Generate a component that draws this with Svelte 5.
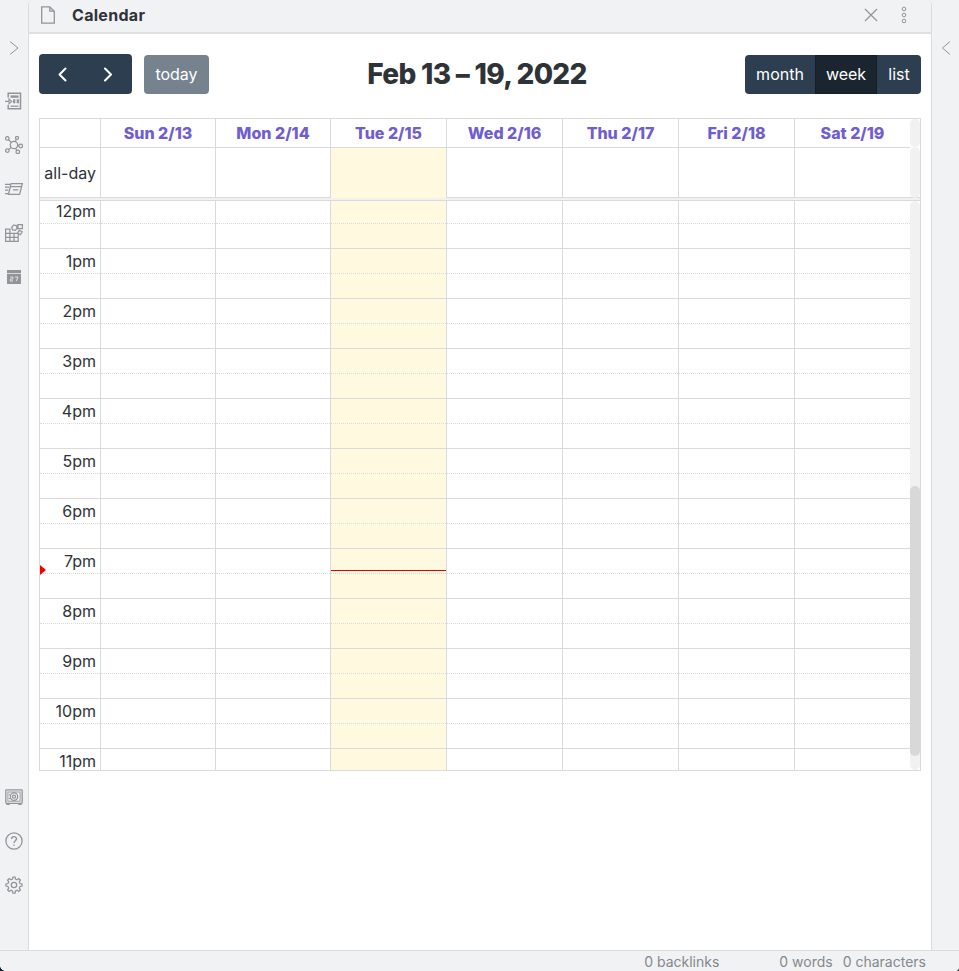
<script>
  const days = ['Sun 2/13', 'Mon 2/14', 'Tue 2/15', 'Wed 2/16', 'Thu 2/17', 'Fri 2/18', 'Sat 2/19'];
  const hours = ['12pm', '1pm', '2pm', '3pm', '4pm', '5pm', '6pm', '7pm', '8pm', '9pm', '10pm', '11pm'];
  const today = 2;
</script>

<div class="app">
  <div class="workspace">
    <nav class="ribbon left">
      <svg class="toggle" width="10" height="16" viewBox="0 0 10 16"><path d="M1 1.5 9 8 1 14.5" /></svg>
      <div class="tools">
        <svg width="18" height="18" viewBox="0 0 18 18">
          <path d="M3.2 5.5V1.3h12.3v15.4H3.2V13" stroke-width="1.5" /><path class="fill" d="M5.5 3.4h8v2.4h-8z" /><path d="M5.5 14.2h8" />
          <path d="M0 9.4h4M4 7l2.8 2.4L4 11.8zM8.6 7.9h1.2v2.9H8.6zM12.2 7.9h1.2v2.9h-1.2z" stroke-width="1.1" />
        </svg>
        <svg width="18" height="18" viewBox="0 0 18 18">
          <circle cx="9" cy="9" r="3.7" /><circle cx="2.3" cy="2.4" r="1.8" /><circle cx="12" cy="1.9" r="1.5" /><circle cx="15.7" cy="10" r="1.8" /><circle cx="2.4" cy="14.6" r="1.8" /><circle cx="12.8" cy="15.8" r="1.8" />
          <path d="m3.6 3.7 2.8 2.9M11.5 3.3 10.2 5.6M12.6 9.4l1.3.3M6.2 11.4 3.9 13.4M10.6 12.3l1.1 2" />
        </svg>
        <svg width="18" height="18" viewBox="0 0 18 18">
          <path d="M6 3.6h11.3L14.6 14.3H3.5zM5.3 6.6h11.1M8 9.8h5.3M0 4.3h5M0 7.2h4M0 10.2h3.3M0 13.7h3.3" stroke-width="1.3" />
        </svg>
        <svg width="18" height="18" viewBox="0 0 18 18">
          <path d="M.6 5.2h4.3v12.2H.6zM.6 9.3h12.6v8.1H.6zM.6 13.3h12.6M9 9.3v8.1M4.9 9.3v8.1" />
          <path d="m8.7 1 2.6.6.9 2.6-1.8 2.2-2.8-.5-.9-2.6zM12.9.7h4.5v4h-4.5zM14.2 6.3l2.9 1.5-1.6 2.9-3-1.6z" />
        </svg>
        <svg width="18" height="18" viewBox="0 0 18 18">
          <path class="fill" d="M2 2h14v3H2zM2 5.8h14V16H2z" />
          <path class="light" d="M5.3 9h2.5v2H5.4v2h2.7M10.1 9h2.8l-1.5 4" />
        </svg>
      </div>
      <div class="tools bottom">
        <svg width="18" height="18" viewBox="0 0 18 18">
          <rect x=".8" y="1.9" width="16.4" height="13.4" rx=".8" stroke-width="1.3" /><rect x="2.9" y="4" width="12.2" height="9.2" stroke-width=".9" /><circle cx="9" cy="8.6" r="3.7" /><circle cx="9" cy="8.6" r="1.6" /><path d="M4.5 6.2v1M4.5 10v1M2 15.5v.8h2v-.8M14 15.5v.8h2v-.8" />
        </svg>
        <svg width="18" height="18" viewBox="0 0 18 18">
          <circle cx="9" cy="9" r="8.1" /><path d="M6.6 7C6.6 3.8 11.5 4 11.5 6.8 11.5 8.7 9 8.7 9 11M9 12.4v1.4" stroke-width="1.4" />
        </svg>
        <svg width="18" height="18" viewBox="0 0 18 18">
          <circle cx="9" cy="9" r="2.7" />
          <path d="M7.9 1h2.2l.4 2 1.6.7L13.8 2.6l1.6 1.6-1.1 1.7.7 1.6 2 .4v2.2l-2 .4-.7 1.6 1.1 1.7-1.6 1.6-1.7-1.1-1.6.7-.4 2H7.9l-.4-2-1.6-.7-1.7 1.1-1.6-1.6 1.1-1.7-.7-1.6-2-.4V7.9l2-.4.7-1.6-1.1-1.7 1.6-1.6 1.7 1.1L7.5 3z" />
        </svg>
      </div>
    </nav>

    <main>
      <header>
        <svg class="doc" width="14" height="18" viewBox="0 0 14 18"><path d="M.7.8h8.1l4.5 4.4v12H.7zM8.8.8v4.4h4.5" stroke-width="1.3" /></svg>
        <span class="view-title">Calendar</span>
        <svg class="close" width="14" height="14" viewBox="0 0 14 14"><path d="m1 1 12 12M13 1 1 13" stroke-width="1.2" /></svg>
        <svg width="6" height="18" viewBox="0 0 6 18"><circle cx="3" cy="3" r="1.8" /><circle cx="3" cy="9" r="1.8" /><circle cx="3" cy="15" r="1.8" /></svg>
      </header>

      <section class="calendar">
        <div class="toolbar">
          <div class="side">
            <div class="group nav">
              <button aria-label="Previous"><svg width="10" height="16" viewBox="0 0 10 16"><path d="M8.5 2.5 2.5 8.5l6 6" /></svg></button>
              <button aria-label="Next"><svg width="10" height="16" viewBox="0 0 10 16"><path d="m1 2.5 6 6-6 6" /></svg></button>
            </div>
            <button class="today-button">today</button>
          </div>
          <h2>Feb 13 – 19, 2022</h2>
          <div class="side end">
            <div class="group views">
              <button class="month">month</button><button class="active">week</button><button class="list">list</button>
            </div>
          </div>
        </div>

        <div class="table">
          <div class="line head">
            <div></div>
            {#each days as day}<div class="cell">{day}</div>{/each}
            <div class="track"></div>
          </div>
          <div class="line allday">
            <div class="axis">all-day</div>
            {#each days as _, i}<div class="cell" class:today={i === today}></div>{/each}
            <div class="track"></div>
          </div>
          <div class="divider"></div>
          <div class="body">
            <div class="slots">
              {#each hours as hour}
                <div class="hour">
                  <div class="axis"><span>{hour}</span>{#if hour === '7pm'}<i class="arrow"></i>{/if}</div>
                  {#each days as _, i}
                    <div class="cell" class:today={i === today}>
                      <div class="half"></div>
                      {#if hour === '7pm' && i === today}<i class="now"></i>{/if}
                    </div>
                  {/each}
                </div>
              {/each}
            </div>
            <div class="track"><div class="thumb"></div></div>
          </div>
        </div>
      </section>
    </main>

    <aside class="ribbon right">
      <svg class="toggle" width="10" height="16" viewBox="0 0 10 16"><path d="M9 1.5 1.5 8 9 14.5" /></svg>
    </aside>
  </div>

  <footer><span class="backlinks">0 backlinks</span><span class="words">0 words</span><span>0 characters</span></footer>
  <i class="corner bl"></i>
  <i class="corner br"></i>
</div>

<style>
  :global(body) { margin: 0; }
  .app { position: relative; width: 959px; height: 971px; display: flex; flex-direction: column; background: #f1f2f4; font: 16px/1.5 Inter, sans-serif; color: #2e3338; overflow: hidden; }
  .app *, .app { box-sizing: border-box; }
  svg { display: block; flex: none; fill: none; stroke: #929497; }
  .workspace { height: 950px; display: flex; }
  .ribbon { flex: none; display: flex; flex-direction: column; align-items: center; padding-top: 40px; }
  .left { width: 28px; }
  .right { width: 27px; padding-left: 1px; }
  .tools { display: flex; flex-direction: column; gap: 26px; margin-top: 36px; }
  .tools svg { stroke-width: 1.25; }
  .bottom { margin-top: auto; margin-bottom: 56px; }
  .fill { fill: #929497; stroke: none; }
  .light { stroke: #e1e2e4; stroke-width: 1; }
  main { flex: none; width: 904px; border: solid #dadbdd; border-width: 0 1px; border-radius: 5px 5px 0 0; background: #fff; overflow: hidden; }
  header { height: 34px; padding: 0 24px 3px 12px; display: flex; align-items: center; background: #f1f2f4; border-bottom: 2px solid #e0e0e4; }
  .view-title { margin-left: 17px; font-weight: 650; font-optical-sizing: none; letter-spacing: .3px; }
  .close { margin-left: auto; margin-right: 23px; }
  .calendar { padding: 20px 10px 0; }
  .toolbar { height: 40px; display: flex; align-items: center; justify-content: space-between; margin-bottom: 24px; }
  .side { width: 180px; display: flex; align-items: center; gap: 12px; }
  .end { width: 186px; justify-content: flex-end; }
  .group { display: flex; border-radius: 4px; overflow: hidden; background: #2c3e50; }
  button { margin: 0; padding: 0; border: 0; background: none; color: #fff; font: 16px/1.5 Inter, sans-serif; }
  .nav { width: 93px; height: 40px; }
  .nav button { flex: 1; display: flex; align-items: center; justify-content: center; }
  .nav svg { stroke: #fff; stroke-width: 2; stroke-linecap: round; stroke-linejoin: round; }
  .today-button { width: 65px; height: 39px; border-radius: 4px; background: #76828e; }
  h2 { width: 240px; margin: 0 -60px; text-align: center; font-size: 28px; line-height: 40px; font-weight: 800; font-optical-sizing: none; letter-spacing: -.7px; white-space: nowrap; }
  .views { height: 39px; }
  .month { width: 70px; }
  .active { width: 62px; background: #1a252f; border: 1px solid #151e27; }
  .list { width: 44px; }
  .table { width: 882px; border: 1px solid #dadadc; }
  .line { display: grid; grid-template-columns: 60px 115px 115px repeat(5, 116px) 10px; }
  .cell { border-left: 1px solid #dadadc; }
  .track { width: 10px; background: #f1f1f1; border-radius: 5px; }
  .head { height: 28px; line-height: 28px; text-align: center; font-weight: 800; font-optical-sizing: none; color: #705dcf; }
  .allday { height: 50px; }
  .allday > div:not(.track), .body .hour { border-top: 1px solid #dadadc; }
  .axis { padding-right: 4px; text-align: right; }
  .allday .axis { line-height: 50px; }
  .today { background: #fff9e0; }
  .divider { height: 4px; border: solid #dadadc; border-width: 1px 0; background: #f1f1f1; }
  .body { height: 569px; display: flex; overflow: hidden; }
  .slots { width: 870px; margin-top: -3px; }
  .hour { height: 50px; display: grid; grid-template-columns: 60px 115px 115px repeat(5, 116px); }
  .hour .axis { position: relative; }
  .hour .axis span { display: block; height: 20px; line-height: 20px; margin: 2px 0; }
  .hour .axis::after { content: ''; display: block; border-top: 1px dotted #dadadc; margin: 0 -4px 0 0; }
  .hour .cell { position: relative; }
  .half { height: 25px; border-bottom: 1px dotted #dadadc; }
  .arrow { position: absolute; left: 0; top: 16px; border: solid transparent; border-width: 5px 0 5px 6px; border-left-color: #f00000; }
  .now { position: absolute; left: 0; right: 0; top: 21px; height: 1px; background: #e00000; }
  .body .track { height: 569px; }
  .thumb { height: 270px; margin-top: 285px; border-radius: 5px; background: #d8d8d8; }
  footer { height: 21px; border-top: 1px solid #dadbdd; display: flex; justify-content: flex-end; padding-right: 33px; font-size: 14px; line-height: 21px; color: #85888c; }
  .backlinks { margin-right: 60px; }
  .words { margin-right: 10px; }
  .corner { position: absolute; bottom: 0; }
  .bl { left: 0; width: 5px; height: 5px; background: radial-gradient(circle at 100% 0, #0000 4.5px, #14212c 5px); }
  .br { right: 0; width: 3px; height: 3px; background: radial-gradient(circle at 0 0, #0000 2.5px, #47484c 3px); }
</style>
